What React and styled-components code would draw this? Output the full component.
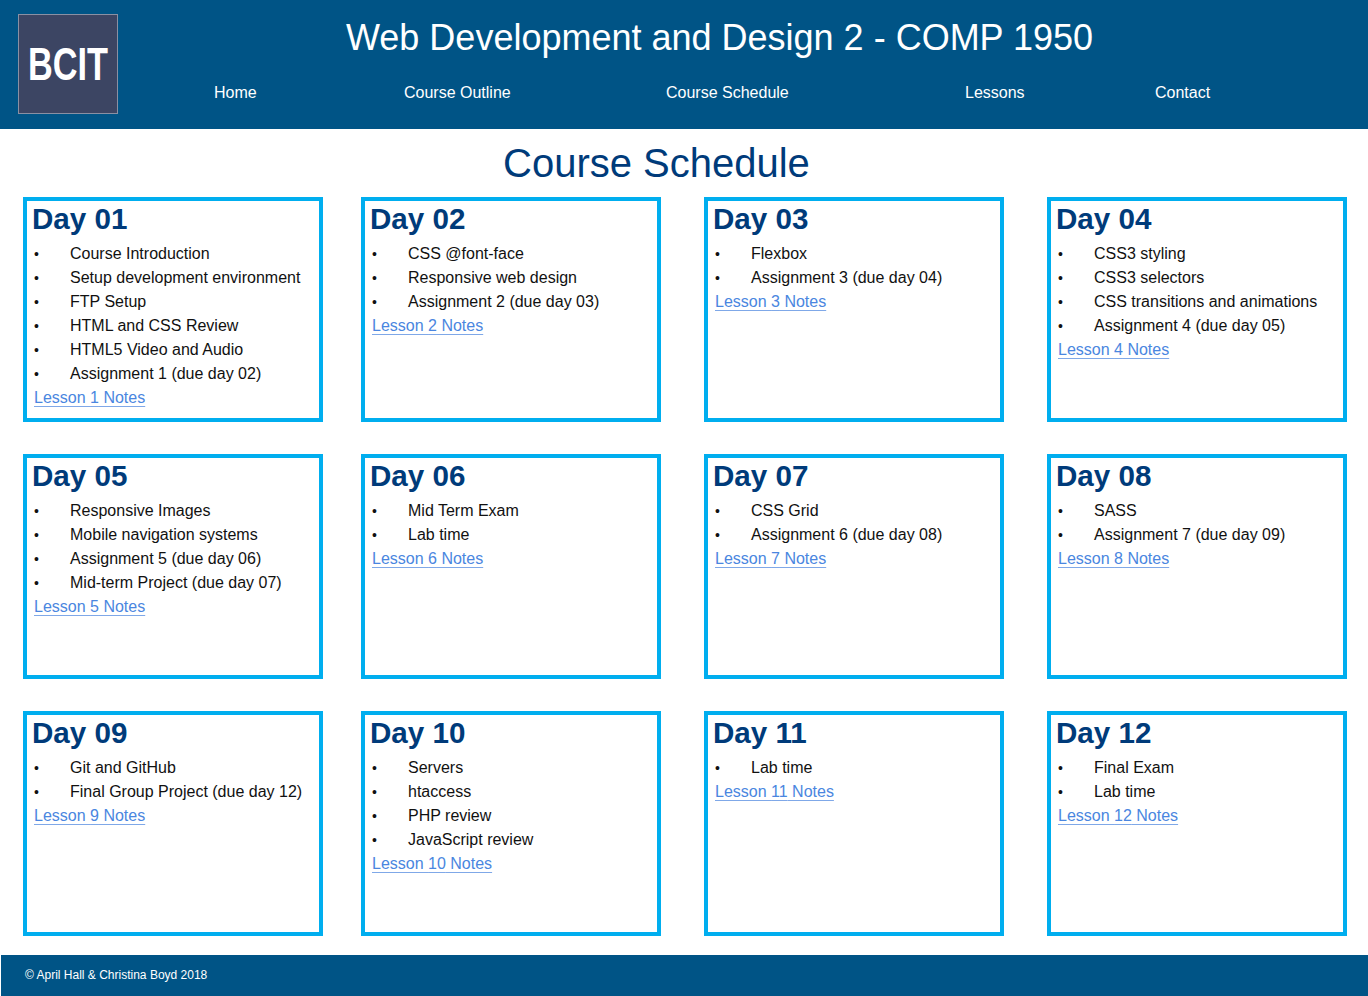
import React from "react";
import styled, { createGlobalStyle } from "styled-components";

const Global = createGlobalStyle`
  html, body { margin: 0; padding: 0; background: #fff; }
  body { font-family: "Liberation Sans", Arial, sans-serif; }
`;
const Page = styled.div`
  width: 1368px; height: 996px; display: flex; flex-direction: column; overflow: hidden;
`;
const Header = styled.header`
  height: 129px; flex: none; background: #005486; display: flex; padding: 14px 0 0 18px; box-sizing: border-box;
`;
const Logo = styled.svg`
  width: 100px; height: 100px; flex: none; display: block; overflow: visible;
`;
const HeaderMain = styled.div`
  flex: 1; display: flex; flex-direction: column;
`;
const SiteTitle = styled.h1`
  margin: 3px 0 0; padding-left: 228px; font-size: 36px; line-height: 42px; font-weight: 400; color: #fff; white-space: nowrap;
`;
const Nav = styled.nav`
  display: grid; grid-template-columns: 190px 262px 299px 190px auto; margin: 25px 0 0 96px;
`;
const NavLink = styled.a`
  color: #fff; font-size: 16px; line-height: 18px; text-decoration: none; white-space: nowrap;
`;
const Heading = styled.h2`
  margin: 11px 0 11px; padding-left: 503px; font-size: 40px; line-height: 46px; font-weight: 400; color: #003b7a; white-space: nowrap;
`;
const Grid = styled.main`
  display: grid; grid-template-columns: 338px 343px 343px 300px; grid-auto-rows: 225px; row-gap: 32px; padding-left: 23px;
`;
const Card = styled.section`
  width: 300px; height: 225px; box-sizing: border-box; border: 4px solid #00aeef; padding: 2px 5px 0;
`;
const DayTitle = styled.h3`
  margin: 0 0 7px; font-size: 29.6px; line-height: 32px; font-weight: 700; color: #003b7a; white-space: nowrap;
`;
const List = styled.ul`
  margin: 0; padding: 0 0 0 2px; list-style: none;
`;
const Item = styled.li`
  display: flex; font-size: 16px; line-height: 24px; color: #111; white-space: nowrap;
  &::before { content: "•"; width: 36px; flex: none; font-size: 14px; }
`;
const Notes = styled.a`
  display: block; margin-left: 2px; font-size: 16px; line-height: 24px; color: #4a86e0;
  text-decoration: underline; text-underline-offset: 3px; text-decoration-color: #7fa8e8; white-space: nowrap;
`;
const Footer = styled.footer`
  margin: 19px 0 0 1px; height: 41px; background: #005486; display: flex; align-items: center; padding: 0 0 2px 24px;
  font-size: 12px; color: #fff; box-sizing: border-box;
`;

const days = [
  ["Course Introduction", "Setup development environment", "FTP Setup", "HTML and CSS Review", "HTML5 Video and Audio", "Assignment 1 (due day 02)"],
  ["CSS @font-face", "Responsive web design", "Assignment 2 (due day 03)"],
  ["Flexbox", "Assignment 3 (due day 04)"],
  ["CSS3 styling", "CSS3 selectors", "CSS transitions and animations", "Assignment 4 (due day 05)"],
  ["Responsive Images", "Mobile navigation systems", "Assignment 5 (due day 06)", "Mid-term Project (due day 07)"],
  ["Mid Term Exam", "Lab time"],
  ["CSS Grid", "Assignment 6 (due day 08)"],
  ["SASS", "Assignment 7 (due day 09)"],
  ["Git and GitHub", "Final Group Project (due day 12)"],
  ["Servers", "htaccess", "PHP review", "JavaScript review"],
  ["Lab time"],
  ["Final Exam", "Lab time"],
];
const links = ["Home", "Course Outline", "Course Schedule", "Lessons", "Contact"];

export default function App() {
  return (
    <Page>
      <Global />
      <Header>
        <Logo viewBox="0 0 100 100">
          <rect x="0.5" y="0.5" width="99" height="99" fill="#3c4563" stroke="#8a90a3" />
          <text x="10" y="65.5" fontFamily="Liberation Sans, sans-serif" fontSize="46" fontWeight="700" fill="#fff" textLength="80" lengthAdjust="spacingAndGlyphs">BCIT</text>
        </Logo>
        <HeaderMain>
          <SiteTitle>Web Development and Design 2 - COMP 1950</SiteTitle>
          <Nav>
            {links.map((l) => <NavLink href="#" key={l}>{l}</NavLink>)}
          </Nav>
        </HeaderMain>
      </Header>
      <Heading>Course Schedule</Heading>
      <Grid>
        {days.map((items, i) => {
          const n = i + 1;
          return (
            <Card key={n}>
              <DayTitle>Day {String(n).padStart(2, "0")}</DayTitle>
              <List>{items.map((t) => <Item key={t}>{t}</Item>)}</List>
              <Notes href="#">Lesson {n} Notes</Notes>
            </Card>
          );
        })}
      </Grid>
      <Footer>© April Hall &amp; Christina Boyd 2018</Footer>
    </Page>
  );
}
